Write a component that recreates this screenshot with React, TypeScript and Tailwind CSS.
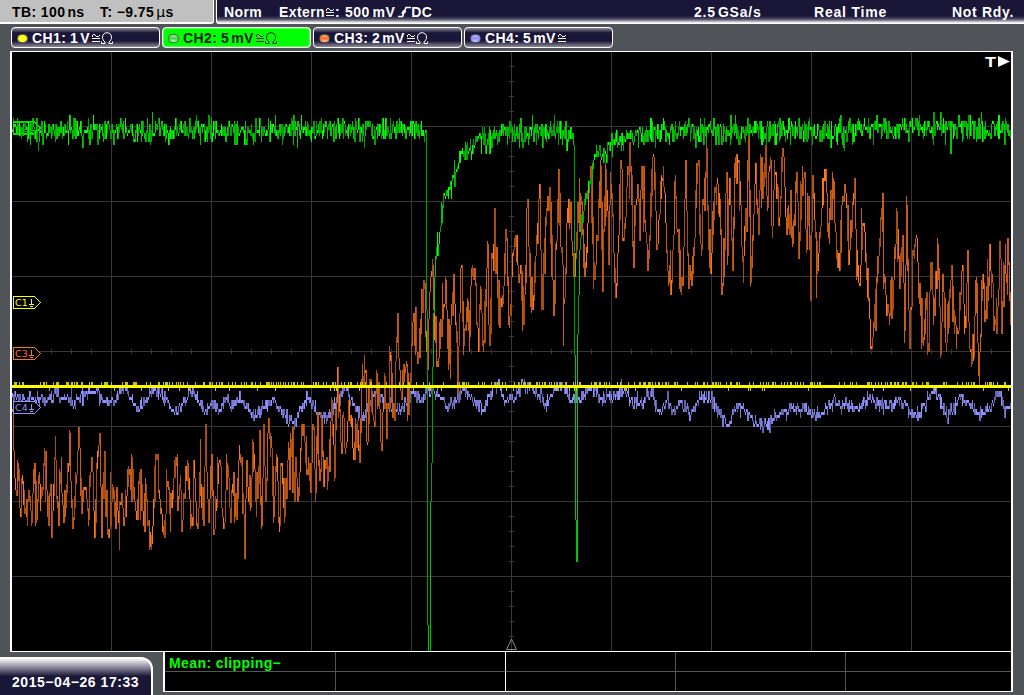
import type { ReactNode } from "react";

type Point = [number, number];

// plot window in screen coordinates
const X0 = 12;
const X1 = 1011;
const Y0 = 52;
const Y1 = 651;

const CH2_POINTS: Point[] = [
  [12, 129], [220, 130], [425, 129], [426, 310], [427, 625], [428, 652], [429, 652], [430, 499], [431, 466],
  [432, 364], [433, 310], [434, 277], [435, 256], [436, 248], [438, 245], [440, 226], [442, 205], [444, 196],
  [446, 188], [449, 186], [452, 175], [455, 171], [458, 162], [461, 151], [468, 150], [474, 145], [480, 137],
  [487, 141], [495, 134], [510, 132], [572, 131], [573, 145], [574, 355], [575, 517], [576, 565], [577, 334],
  [578, 295], [579, 250], [580, 238], [582, 220], [584, 200], [587, 190], [590, 178], [592, 163], [597, 155],
  [605, 153], [610, 142], [625, 137], [640, 132], [660, 130], [820, 130], [920, 127], [1011, 129],
];

const CH3_POINTS: Point[] = [
  [12, 412], [13, 440], [15, 485], [16, 490], [18, 470], [20, 512], [22, 475], [25, 512], [28, 490], [31, 520],
  [33, 470], [35, 522], [38, 472], [41, 495], [43, 460], [46, 490], [47, 512], [50, 485], [51, 537], [54, 453],
  [57, 505], [58, 519], [59, 470], [62, 500], [65, 512], [68, 470], [69, 433], [71, 500], [73, 515], [76, 470],
  [78, 427], [80, 490], [84, 485], [86, 500], [88, 519], [91, 452], [94, 530], [96, 460], [99, 434], [101, 533],
  [104, 452], [107, 534], [109, 530], [112, 485], [114, 515], [116, 490], [118, 522], [120, 500], [124, 518],
  [128, 468], [130, 490], [132, 461], [135, 505], [138, 485], [141, 507], [143, 520], [145, 483], [148, 523],
  [151, 543], [153, 500], [156, 458], [158, 490], [161, 510], [163, 530], [165, 515], [167, 482], [169, 516],
  [172, 490], [176, 463], [178, 500], [180, 480], [182, 522], [184, 500], [187, 465], [191, 523], [193, 458],
  [195, 500], [197, 525], [199, 475], [203, 528], [205, 425], [207, 500], [208, 516], [210, 470], [212, 490],
  [214, 530], [217, 463], [219, 455], [221, 500], [223, 531], [227, 466], [230, 517], [232, 490], [234, 520],
  [238, 465], [241, 457], [244, 552], [246, 465], [248, 500], [250, 504], [253, 446], [255, 498], [258, 465],
  [261, 520], [263, 430], [265, 500], [268, 418], [271, 450], [273, 516], [276, 455], [279, 528], [281, 465],
  [284, 514], [288, 440], [291, 455], [293, 490], [295, 455], [298, 493], [301, 422], [304, 440], [307, 470],
  [310, 490], [313, 422], [315, 491], [317, 412], [319, 480], [321, 418], [323, 487], [325, 470], [328, 474],
  [331, 398], [334, 475], [337, 370], [341, 453], [343, 415], [345, 453], [348, 400], [353, 460], [355, 415],
  [358, 450], [360, 425], [363, 379], [365, 370], [367, 442], [369, 380], [372, 415], [374, 430], [376, 373],
  [379, 410], [381, 453], [384, 375], [386, 438], [389, 350], [392, 415], [394, 417], [397, 322], [400, 390],
  [403, 370], [406, 360], [408, 415], [411, 345], [413, 313], [416, 350], [418, 354], [421, 292], [424, 283],
  [427, 366], [429, 290], [432, 262], [434, 335], [437, 360], [439, 325], [441, 335], [443, 304], [445, 277],
  [449, 360], [453, 271], [456, 335], [458, 350], [461, 262], [463, 350], [467, 295], [469, 345], [471, 270],
  [474, 268], [478, 357], [480, 286], [483, 348], [487, 241], [489, 343], [492, 256], [496, 245], [499, 322],
  [503, 290], [506, 232], [509, 322], [513, 250], [515, 238], [518, 275], [520, 265], [523, 322], [527, 199],
  [530, 303], [533, 300], [536, 240], [539, 187], [541, 304], [545, 215], [549, 187], [553, 315], [556, 240],
  [558, 165], [560, 244], [564, 297], [567, 215], [570, 205], [573, 270], [575, 255], [577, 202], [581, 205],
  [585, 277], [588, 190], [590, 169], [594, 283], [598, 200], [600, 163], [602, 289], [605, 165], [608, 257],
  [610, 176], [613, 250], [616, 283], [619, 190], [621, 172], [623, 245], [627, 170], [630, 168], [633, 264],
  [637, 180], [639, 240], [641, 163], [644, 220], [648, 259], [653, 155], [655, 210], [657, 246], [661, 172],
  [664, 190], [668, 284], [672, 250], [674, 182], [677, 230], [679, 286], [682, 286], [685, 160], [688, 286],
  [691, 286], [695, 190], [698, 162], [701, 252], [703, 200], [706, 145], [708, 250], [711, 255], [714, 190],
  [717, 178], [722, 286], [726, 168], [727, 255], [729, 182], [732, 271], [734, 160], [738, 157], [742, 267],
  [746, 234], [748, 140], [750, 282], [755, 163], [758, 228], [760, 154], [762, 190], [765, 142], [767, 204],
  [770, 160], [772, 228], [774, 168], [779, 222], [781, 157], [783, 157], [786, 231], [790, 190], [792, 250],
  [796, 168], [798, 258], [801, 190], [804, 172], [806, 249], [808, 200], [810, 303], [812, 178], [817, 273],
  [821, 208], [825, 175], [828, 240], [833, 178], [836, 252], [839, 267], [842, 198], [845, 190], [848, 265],
  [850, 215], [853, 193], [857, 270], [859, 285], [862, 220], [864, 228], [868, 300], [871, 349], [873, 324],
  [876, 280], [881, 214], [884, 280], [888, 312], [893, 285], [896, 210], [899, 290], [902, 235], [904, 331],
  [906, 205], [909, 345], [913, 250], [916, 238], [918, 295], [923, 342], [925, 300], [928, 348], [930, 260],
  [934, 313], [937, 240], [940, 358], [942, 280], [946, 350], [949, 295], [951, 268], [954, 333], [958, 333],
  [962, 265], [965, 333], [967, 256], [969, 345], [973, 360], [976, 286], [978, 369], [980, 335], [982, 280],
  [985, 315], [990, 268], [994, 318], [997, 310], [1000, 259], [1001, 327], [1004, 265], [1006, 285],
  [1008, 262], [1011, 325],
];

const CH4_POINTS: Point[] = [
  [12, 393], [20, 398], [26, 400], [30, 395], [34, 402], [40, 396], [46, 400], [55, 393], [62, 397], [73, 402],
  [80, 395], [86, 391], [95, 392], [105, 402], [112, 400], [118, 393], [124, 385], [130, 400], [137, 408],
  [145, 400], [150, 393], [160, 393], [168, 400], [172, 412], [177, 413], [184, 396], [190, 391], [198, 400],
  [204, 412], [210, 404], [216, 404], [220, 411], [225, 396], [232, 407], [238, 398], [245, 406], [254, 414],
  [264, 405], [272, 397], [280, 410], [293, 422], [300, 407], [307, 398], [317, 412], [325, 418], [335, 404],
  [345, 386], [352, 405], [362, 420], [370, 398], [377, 392], [385, 404], [395, 408], [405, 403], [412, 392],
  [420, 400], [428, 387], [440, 396], [449, 407], [456, 399], [463, 388], [470, 396], [482, 409], [488, 393],
  [497, 382], [506, 400], [514, 397], [520, 386], [530, 384], [538, 395], [545, 403], [555, 386], [563, 383],
  [570, 397], [580, 400], [592, 384], [600, 396], [612, 396], [622, 388], [630, 399], [640, 401], [650, 391],
  [660, 412], [666, 398], [672, 410], [680, 402], [690, 412], [700, 397], [710, 398], [718, 412], [727, 424],
  [735, 408], [742, 407], [752, 418], [763, 426], [775, 416], [788, 408], [803, 407], [810, 413], [822, 411],
  [830, 403], [843, 400], [856, 407], [868, 397], [878, 402], [887, 408], [898, 399], [905, 405], [912, 415],
  [920, 411], [930, 393], [937, 394], [944, 415], [952, 408], [958, 396], [967, 400], [975, 410], [982, 413],
  [987, 405], [990, 412], [997, 390], [1003, 407], [1011, 409],
];

function makeRandom(seed: number) {
  let s = seed;
  return () => {
    s = (s * 1664525 + 1013904223) % 4294967296;
    return s / 4294967296;
  };
}

// two samples per pixel column, joined into vertical bars in three intensities
function buildTrace(points: Point[], seed: number, noise: number, steepLimit: number) {
  const random = makeRandom(seed);
  const paths = ["", "", ""];
  let k = 0;
  let prev = points[0][1];
  for (let x = X0; x < X1; x++) {
    while (k < points.length - 2 && points[k + 1][0] <= x) k++;
    const [ax, ay] = points[k];
    const [bx, by] = points[k + 1];
    const base = ay + ((by - ay) * (x - ax)) / (bx - ax);
    const steep = Math.abs(by - ay) / (bx - ax) > steepLimit;
    const jitter = steep || x === ax ? 0.25 : 1;
    const peak = random() > 0.95 ? 1.5 : 1;
    const sample = () => 1 + Math.round((base + (random() + random() + random() - 1.5) * noise * jitter * peak) / 3) * 3;
    const y = sample();
    const other = steep ? y : sample();
    const top = Math.min(prev, y, other);
    const len = Math.max(3, Math.max(prev, y, other) - top);
    // long sweeps are dimmer than short ones
    const shade = len <= 3 ? 0 : len > 30 ? (random() > 0.5 ? 1 : 2) : Math.min(2, Math.floor(0.6 + random() * 2.2));
    paths[shade] += `M${x + 0.5} ${top}v${len}`;
    prev = y;
  }
  return paths;
}

const CH2_TRACE = buildTrace(CH2_POINTS, 17, 13, 12);
const CH3_TRACE = buildTrace(CH3_POINTS, 42, 30, 400);
const CH4_TRACE = buildTrace(CH4_POINTS, 7, 8, 400);

function buildTicks() {
  const random = makeRandom(91);
  let up = "";
  let down = "";
  for (let x = X0; x < X1; x++) {
    const r = random();
    if (r < 0.27) up += `M${x + 0.5} 382v3`;
    else if (r > 0.95) down += `M${x + 0.5} 388v3`;
  }
  return [up, down];
}

const [CH1_UP, CH1_DOWN] = buildTicks();

function Trace({ paths, colors }: { paths: string[]; colors: string[] }) {
  return (
    <g fill="none" shapeRendering="crispEdges">
      {[2, 1, 0].map((i) => (
        <path key={i} d={paths[i]} stroke={colors[i]} />
      ))}
    </g>
  );
}

function Marker({ y, label, color }: { y: number; label: string; color: string }) {
  return (
    <g transform={`translate(13 ${y - 6})`} stroke={color} fill="none">
      <path d="M.5 .5H21.5L27.5 6.5L21.5 12.5H.5Z" fill="#000" shapeRendering="crispEdges" />
      <path d="M18.5 3V8M16 8.5h5M17 10.5h3" shapeRendering="crispEdges" />
      <text x="2" y="10" fill={color} stroke="none" fontSize="9.5" fontWeight="normal" letterSpacing=".2" fontFamily="DejaVu Sans, sans-serif">
        {label}
      </text>
    </g>
  );
}

function Grid() {
  let lines = "";
  let ticks = "";
  for (let x = 111; x < X1; x += 100) lines += `M${x + 0.5} ${Y0}V${Y1}`;
  for (let y = 126; y < Y1; y += 75) lines += `M${X0} ${y + 0.5}H${X1}`;
  for (let x = 31; x < X1; x += 20) ticks += `M${x + 0.5} 349v5`;
  for (let y = 66; y < 640; y += 15) ticks += `M509 ${y + 0.5}h5`;
  return <path d={lines + ticks} stroke="#373737" fill="none" shapeRendering="crispEdges" />;
}

function Waveforms() {
  return (
    <svg className="block" width="999" height="599" viewBox="12 52 999 599">
      <Grid />
      <Marker y={128} label="C2" color="#00e600" />
      <Trace paths={CH4_TRACE} colors={["#9090ff", "#7c7cd8", "#6262ad"]} />
      <Trace paths={CH3_TRACE} colors={["#ff761a", "#cb5c14", "#a84c10"]} />
      <Trace paths={CH2_TRACE} colors={["#00ff00", "#00c800", "#00a000"]} />
      <g fill="none" shapeRendering="crispEdges">
        <path d={CH1_UP} stroke="#c8c800" />
        <path d={CH1_DOWN} stroke="#c8c800" />
        <path d="M12 386.5H1011" stroke="#ffff00" strokeWidth="3" />
      </g>
      <path d="M13.5 121.5H34.5L40.5 127.5L34.5 133.5H13.5Z" fill="none" stroke="#00e600" shapeRendering="crispEdges" />
      <Marker y={302} label="C1" color="#ffff00" />
      <Marker y={353} label="C3" color="#ff761a" />
      <Marker y={407} label="C4" color="#9090ff" />
      <path d="M511.5 639L516.5 649.5H506.5Z" fill="none" stroke="#8a8a8a" />
      <text x="985" y="67" fill="#fff" fontSize="15.5" fontWeight="bold" textLength="11" lengthAdjust="spacingAndGlyphs" fontFamily="Liberation Sans, sans-serif">
        T
      </text>
      <path d="M998 56L1010 61.5L998 67Z" fill="#fff" />
    </svg>
  );
}

// tilde over an equals sign
function AcDcIcon({ className = "" }: { className?: string }) {
  return (
    <svg className={className} width="8" height="10" viewBox="0 0 8 10" fill="none" stroke="currentColor" shapeRendering="crispEdges">
      <path d="M0 2.5h1M1 1.5h2M3 2.5h1M4 3.5h3M7 2.5h1M0 3.5h1M0 5.5h8M0 8.5h8" />
    </svg>
  );
}

function Coupling({ ohm = true }: { ohm?: boolean }) {
  return (
    <span className="ml-[2px] flex items-center">
      <AcDcIcon />
      {ohm && (
        <svg className="ml-px" width="12" height="12" viewBox="0 0 12 12" fill="none" stroke="currentColor">
          <path d="M.5 9.5V11.5H4V10C2.3 8.8 1.5 7 1.5 5C1.5 2.5 3.5 .7 6 .7S10.5 2.5 10.5 5C10.5 7 9.7 8.8 8 10V11.5H11.5V9.5" />
        </svg>
      )}
    </span>
  );
}

const CHANNELS = [
  { name: "CH1:", value: "1", unit: "V", led: "bg-[#ffff20]", ohm: true, active: false },
  { name: "CH2:", value: "5", unit: "mV", led: "bg-linear-to-b from-[#a8e8a8] via-[#40d040] to-[#c0ffc0]", ohm: true, active: true },
  { name: "CH3:", value: "2", unit: "mV", led: "bg-linear-to-b from-[#ffa060] via-[#ff701c] to-[#ffc090]", ohm: true, active: false },
  { name: "CH4:", value: "5", unit: "mV", led: "bg-linear-to-b from-[#b0b0ff] via-[#9090ff] to-[#c0c0ff]", ohm: false, active: false },
];

function Channel({ name, value, unit, led, ohm, active }: (typeof CHANNELS)[number]) {
  return (
    <div
      className={`flex h-[21px] w-[149px] items-center rounded-[4px] border border-white pt-px pl-[5px] tracking-[.4px] ${
        active
          ? "bg-[#00ff00] text-[#102010] shadow-[inset_0_0_2px_#fff]"
          : "bg-[linear-gradient(#8d8b9b,#1a1638_25%,#1a1638_68%,#8d8b9b)] text-white"
      }`}
    >
      <span className={`mr-[4px] h-[9px] w-[11px] rounded-full border border-[#55555a] ${led}`} />
      <span className="w-[38px]">{name}</span>
      <span className="mr-[2px]">{value}</span>
      <span>{unit}</span>
      <Coupling ohm={ohm} />
    </div>
  );
}

function Header() {
  return (
    <header className="flex h-6 leading-[22px]">
      <div className="flex w-[214px] rounded-br-[3px] border-r border-b-2 border-white bg-[#c0c0c0] pl-3 tracking-[.4px] text-black">
        <Field width="w-[88px]">TB: 100<span className="ml-[2px]">ns</span></Field>
        <Field width="w-[90px]">T: −9.75<span className="ml-[2px] font-['DejaVu_Sans'] text-[14px] font-normal">µ</span>s</Field>
      </div>
      <div className="ml-[2px] flex flex-1 rounded-bl-[3px] border-b border-l border-white bg-[linear-gradient(#1a1638_70%,#55526c_84%,#fff)] pl-[7px] text-white">
        <Field width="w-[55px]"><span className="tracking-[.4px]">Norm</span></Field>
        <div className="flex w-[415px] items-center pt-px tracking-[.4px]">
          Extern
          <AcDcIcon className="mx-px" />
          <span>:</span>
          <span className="ml-[5px]">500</span>
          <span className="ml-[3px]">mV</span>
          <svg className="ml-[3px]" width="13" height="12" viewBox="0 0 13 12" fill="none" stroke="currentColor" strokeWidth="1.7">
            <path d="M0 10.5H4.5L8 1.5H13M4 8L5.5 5L8 6" />
          </svg>
          <span>DC</span>
        </div>
        <Field width="w-[120px]"><span className="tracking-[.8px]">2.5<span className="ml-[2px]">GSa/s</span></span></Field>
        <Field width="w-[138px]"><span className="tracking-[.8px]">Real Time</span></Field>
        <Field width="w-[70px]"><span className="tracking-[.7px]">Not Rdy.</span></Field>
      </div>
    </header>
  );
}

function Field({ width, children }: { width: string; children: ReactNode }) {
  return <div className={`${width} pt-px whitespace-nowrap`}>{children}</div>;
}

function Footer() {
  return (
    <footer className="flex h-[43px]">
      <div className="mt-[5px] h-[38px] w-[153px] rounded-tr-[12px] border-t-2 border-r-2 border-white bg-[linear-gradient(#f4f4f6,#1a1638_48%)] pt-[13px] pl-[12px] leading-[21px] tracking-[.55px] whitespace-nowrap text-white">
        2015−04−26 17:33
      </div>
      <div className="ml-[10px] grid h-[40px] w-[850px] grid-cols-[171px_170px_170px_170px_1fr] grid-rows-[20px_19px] border-r-2 border-b border-l-2 border-white bg-black">
        <div className="border-r border-b border-[#555] pt-px pl-1 leading-[21px] tracking-[.4px] whitespace-nowrap text-[#00ff00]">
          Mean: clipping−
        </div>
        <div className="border-r border-b border-[#555] border-r-white" />
        <div className="border-r border-b border-[#555]" />
        <div className="border-r border-b border-[#555]" />
        <div className="border-b border-[#555]" />
        <div className="border-r border-[#555]" />
        <div className="border-r border-white" />
        <div className="border-r border-[#555]" />
        <div className="border-r border-[#555]" />
        <div />
      </div>
    </footer>
  );
}

export default function App() {
  return (
    <div className="h-[695px] w-[1024px] overflow-hidden bg-[#505357] font-['Liberation_Sans',sans-serif] text-[14px] font-bold">
      <Header />
      <div className="flex h-[27px] gap-[2px] pt-[3px] pl-[11px]">
        {CHANNELS.map((channel) => (
          <Channel key={channel.name} {...channel} />
        ))}
      </div>
      <div className="ml-[10px] h-[601px] w-[1003px] border-x-2 border-y border-white bg-black">
        <Waveforms />
      </div>
      <Footer />
    </div>
  );
}
